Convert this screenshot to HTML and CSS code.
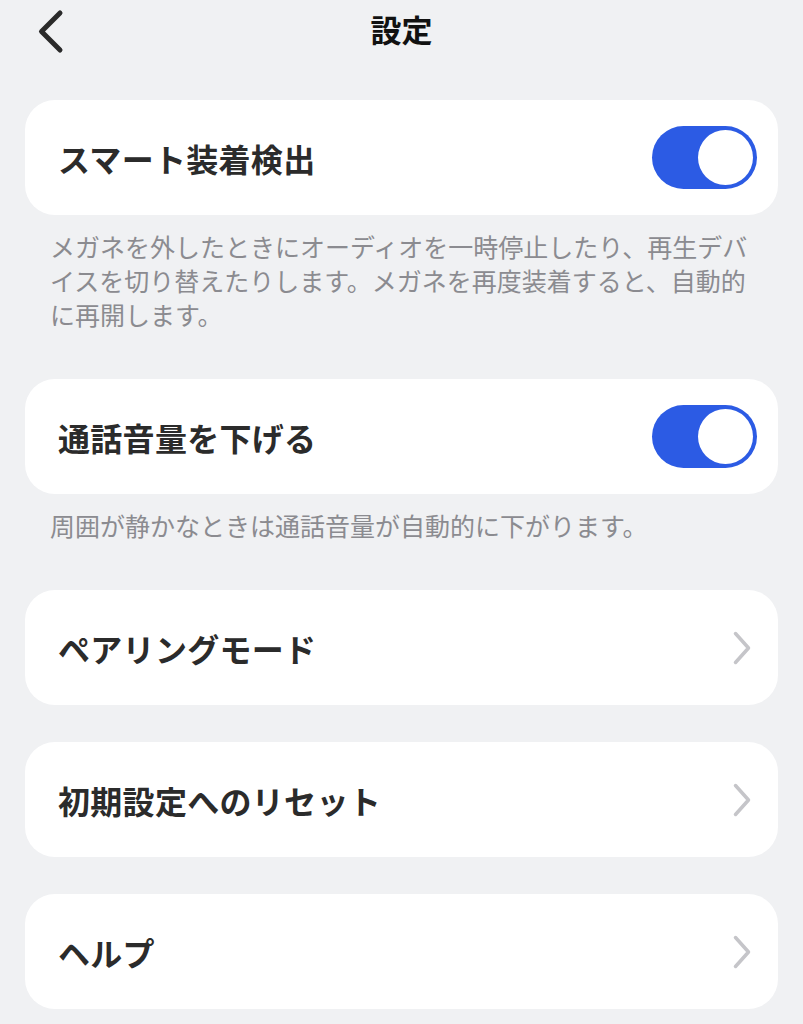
FILE: index.html
```html
<!DOCTYPE html>
<html lang="ja">
<head>
<meta charset="utf-8">
<link rel="stylesheet" href="styles.css">
</head>
<body>
<div class="page">
  <header class="header">
    <button class="back" aria-label="戻る">
      <svg width="28" height="46" viewBox="0 0 28 46"><path d="M23 5 L4.5 23.5 L23 42" fill="none" stroke="#2a2a2a" stroke-width="5" stroke-linecap="round" stroke-linejoin="round"/></svg>
    </button>
    <h1 class="title">設定</h1>
    <span></span>
  </header>

  <section class="group first">
    <div class="card">
      <span class="label">スマート装着検出</span>
      <span class="toggle on"><span class="knob"></span></span>
    </div>
    <p class="desc">メガネを外したときにオーディオを一時停止したり、再生デバイスを切り替えたりします。メガネを再度装着すると、自動的に再開します。</p>
  </section>

  <section class="group">
    <div class="card">
      <span class="label">通話音量を下げる</span>
      <span class="toggle on"><span class="knob"></span></span>
    </div>
    <p class="desc">周囲が静かなときは通話音量が自動的に下がります。</p>
  </section>

  <div class="links">
    <div class="card link">
      <span class="label">ペアリングモード</span>
      <svg class="chev" width="20" height="36" viewBox="0 0 20 36"><path d="M3.5 3.5 L16.5 18 L3.5 32.5" fill="none" stroke="#c5c5c9" stroke-width="3.5" stroke-linecap="round" stroke-linejoin="round"/></svg>
    </div>
    <div class="card link">
      <span class="label">初期設定へのリセット</span>
      <svg class="chev" width="20" height="36" viewBox="0 0 20 36"><path d="M3.5 3.5 L16.5 18 L3.5 32.5" fill="none" stroke="#c5c5c9" stroke-width="3.5" stroke-linecap="round" stroke-linejoin="round"/></svg>
    </div>
    <div class="card link">
      <span class="label">ヘルプ</span>
      <svg class="chev" width="20" height="36" viewBox="0 0 20 36"><path d="M3.5 3.5 L16.5 18 L3.5 32.5" fill="none" stroke="#c5c5c9" stroke-width="3.5" stroke-linecap="round" stroke-linejoin="round"/></svg>
    </div>
  </div>
</div>
</body>
</html>
```

FILE: styles.css
```css
html, body {
  margin: 0;
  padding: 0;
  background: #f0f1f3;
}
body {
  font-family: "Noto Sans CJK JP", "Noto Sans", sans-serif;
  color: #2b2b2b;
}
.page {
  padding: 0 25px;
  display: flex;
  flex-direction: column;
}
.header {
  height: 61px;
  display: grid;
  grid-template-columns: 1fr auto 1fr;
  align-items: center;
}
.back {
  background: none;
  border: 0;
  padding: 0;
  margin: 0 0 0 12px;
  width: 28px;
  height: 46px;
  display: flex;
  align-items: center;
}
.back svg {
  display: block;
}
.title {
  margin: 0;
  font-size: 31px;
  font-weight: 700;
  color: #111;
  line-height: 1;
  position: relative;
  top: -2px;
}
.group {
  display: flex;
  flex-direction: column;
}
.group.first {
  margin-top: 39px;
}
.group + .group,
.group + .links {
  margin-top: 48px;
}
.card {
  height: 115px;
  background: #fff;
  border-radius: 30px;
  display: flex;
  align-items: center;
  justify-content: space-between;
  padding: 0 21px 0 33px;
  box-sizing: border-box;
}
.label {
  font-size: 32px;
  font-weight: 700;
  color: #2b2b2b;
  letter-spacing: 0.3px;
}
.toggle {
  width: 105px;
  height: 63px;
  border-radius: 32px;
  background: #2c5be4;
  display: flex;
  align-items: center;
  justify-content: flex-end;
  padding: 0 4px;
  box-sizing: border-box;
}
.knob {
  width: 55px;
  height: 55px;
  border-radius: 50%;
  background: #fff;
}
.desc {
  margin: 14px 18px 0 25px;
  font-size: 25px;
  line-height: 34px;
  color: #8b8b90;
}
.links {
  display: flex;
  flex-direction: column;
  gap: 37px;
}
.link {
  padding-right: 26px;
}
.chev {
  display: block;
}
```
